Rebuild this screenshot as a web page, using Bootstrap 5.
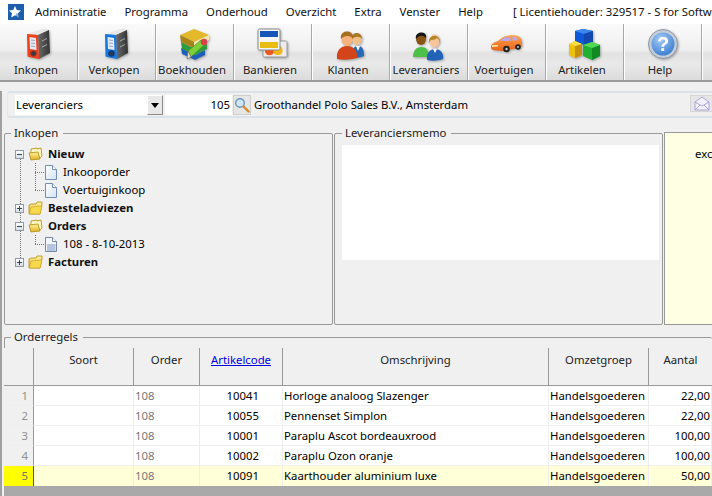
<!DOCTYPE html>
<html lang="nl">
<head>
<meta charset="utf-8">
<title>Leveranciers</title>
<link href="https://cdn.jsdelivr.net/npm/bootstrap@5.3.0/dist/css/bootstrap.min.css" rel="stylesheet">
<style>
html,body{width:712px;height:496px;overflow:hidden}
body{background:#f0f0f0;color:#000;font:11.35px/16px "Noto Sans","Liberation Sans",sans-serif}
.menu-strip{height:24px;background:#fff;padding-left:8px;white-space:nowrap;overflow:hidden}
.app-mark{width:16px;height:16px;margin-right:11px;flex:none}
.menu-strip span{margin-right:18px;color:#111}
.menu-strip .lic{margin:0 0 0 12px}
.tool-strip{height:58px;background:linear-gradient(#fafafa 0,#efefef 26px,#e2e2e2 29px,#e9e9e9 40px,#dcdcdc 55px);border-bottom:2px solid #9a9a9a}
.tool-btn{width:78px;height:56px;flex:none;border-right:1px solid #a8a8a8;box-shadow:1px 0 0 #fff;color:#222;padding-top:4px;text-align:center}
.tool-btn svg{display:block;margin:0 auto;width:36px;height:34px;filter:drop-shadow(1px 1px 1px rgba(0,0,0,.3))}
.tool-btn span{display:block;padding-right:5px}
.main-wrap{border-left:2px solid #a0a0a0;height:414px}
.cust-band{margin:9px 0 0 5px;height:27px;border-top:2px solid #dbe3e8;border-bottom:2px solid #dbe3e8;border-left:1px solid #e4e8ea;border-radius:3px 0 0 3px;padding:2px 0 0 7px;white-space:nowrap}
.pick{width:148px;height:20px;background:#fff;padding-left:1px;line-height:20px}
.pick-arrow{width:16px;height:20px;background:#e8e8e8;border:1px solid #8d8d8d;border-top-color:#fff;border-left-color:#fff}
.pick-arrow i{border:4px solid transparent;border-top:5px solid #000;border-bottom:0;display:block}
.num-box{width:67px;height:20px;margin-left:2px;background:#fff;text-align:right;padding-right:2px;line-height:20px}
.icon-btn{width:18px;height:20px;margin-left:1px;background:#e6e6e6;border:1px solid #cfcfcf}
.cust-name{margin-left:3px;line-height:20px}
.mail-btn{width:22px;height:17px;margin-left:auto;background:#e6e6e6;border:1px solid #d6d6d6;border-right:0}
.panes{height:200px;margin:8px 0 0 2px;gap:1px}
fieldset.grp{border:1px solid #999;border-radius:2px;padding:0;margin:0;min-width:0;position:relative}
fieldset.grp legend{float:none;width:auto;font-size:11.35px;line-height:14px;margin:0 0 0 6px;padding:0 5px 0 3px;color:#222}
fieldset.pane-tree{width:329px;height:199px}
fieldset.pane-memo{width:329px;height:199px;padding:0 3px 0 7px}
fieldset.pane-memo legend{margin-left:0}
.memo-area{height:115px;background:#fff;margin-top:5px}
.pane-note{flex:1 0 0;height:193px;margin-top:6px;background:#ffffe3;border:1px solid #999;border-right:0;padding:13px 0 0 30px;overflow:hidden}
.twig{list-style:none;margin:0;padding:0}
.tree-top{padding:5px 0 0 10px;position:relative}
.tree-top>.twig-main{position:relative}
.tree-rail{position:absolute;left:15px;top:15px;height:107px;border-left:1px dotted #777}
.twig-row{height:18px;display:flex;align-items:center;white-space:nowrap;position:relative}
.twig-row b{font-weight:700;color:#111}
.xp{width:9px;height:9px;border:1px solid #8f9aa5;background:linear-gradient(#fff,#d8dde2);margin-right:4px;flex:none;position:relative}
.xp::before{content:"";position:absolute;left:1px;right:1px;top:3px;height:1px;background:#345}
.xp.plus::after{content:"";position:absolute;top:1px;bottom:1px;left:3px;width:1px;background:#345}
.fold{width:15px;height:14px;margin-right:5px;flex:none}
.twig-kids{position:relative;padding-left:30px}
.twig-kids::before{content:"";position:absolute;left:20px;top:0;bottom:9px;border-left:1px dotted #777}
.twig-kids .twig-row::before{content:"";position:absolute;left:-10px;width:9px;top:9px;border-top:1px dotted #777}
.twig-kids svg{width:12px;height:15px;margin:0 6px 0 0;flex:none}
fieldset.order-grp{height:166px;margin:4px 0 0 2px;border-right:0;border-bottom:0;overflow:visible}
fieldset.order-grp legend{margin-left:6px}
.grid-wrap{margin-top:4px;overflow:hidden;margin-left:-1px}
table.ord{table-layout:fixed;width:708px;border-collapse:separate;border-spacing:0;margin:0;background:#fff;font-size:11.35px;line-height:14px}
table.ord td,table.ord th{padding:0 1px;overflow:hidden;white-space:nowrap;vertical-align:middle}
table.ord th{height:38px;background:#f0f0f0;font-weight:400;text-align:center;vertical-align:top;padding-top:5px;color:#222;border-right:1px solid #999;border-bottom:1px solid #999}
table.ord th:last-child{border-right:0}
table.ord th a{color:#0000e0}
table.ord td{height:20px;border-right:1px solid #eee;border-bottom:1px solid #eee}
table.ord td.rownum{background:#f0f0f0;color:#909090;text-align:right;padding-right:5px;border-right:1px solid #999}
table.ord td.gr{color:#777}
table.ord td.code{text-align:right;padding-right:23px}
table.ord td.amt{text-align:right;padding-right:1px}
table.ord tr.hit td{background:#ffffd8;border-bottom:0}
table.ord tr.hit td.rownum{background:#ffff00;color:#777;border-right-color:#555}
.grid-foot{height:10px;background:#a9a9a9}
</style>
</head>
<body>
<svg width="0" height="0" class="position-absolute">
<defs>
<linearGradient id="gF" x1="0" y1="0" x2="0" y2="1"><stop offset="0" stop-color="#fff3a0"/><stop offset="1" stop-color="#e0b020"/></linearGradient>
<linearGradient id="gBk" x1="0" y1="0" x2="1" y2="0"><stop offset="0" stop-color="#6a6a6a"/><stop offset="1" stop-color="#333"/></linearGradient>
<linearGradient id="gDoc" x1="0" y1="0" x2="1" y2="1"><stop offset="0" stop-color="#fff"/><stop offset="1" stop-color="#d5e2f2"/></linearGradient>
<linearGradient id="gCar" x1="0" y1="0" x2="0" y2="1"><stop offset="0" stop-color="#ffa24a"/><stop offset="1" stop-color="#e8621a"/></linearGradient>
<radialGradient id="gHelp" cx=".4" cy=".3" r=".8"><stop offset="0" stop-color="#a8cdf5"/><stop offset="1" stop-color="#2f76cf"/></radialGradient>
<symbol id="folder" viewBox="0 0 15 14"><path d="M1 4 1 13 12 13 14 3 14 1 9 1 8 3 3 3Z" fill="url(#gF)" stroke="#b08a10" stroke-width=".8"/><path d="M1.500 13 3 6 14 5 12 13Z" fill="#f7d94c" stroke="#c9a01a" stroke-width=".6"/></symbol>
<symbol id="folderO" viewBox="0 0 15 14"><path d="M3 4 3 2 9 1 9 2 13 1 14 9 12 11 3 11Z" fill="#fff6c0" stroke="#b08a10" stroke-width=".8"/><path d="M1 6 10 5 12 12 3 13Z" fill="url(#gF)" stroke="#b08a10" stroke-width=".8"/></symbol>
<symbol id="doc" viewBox="0 0 12 15"><path d="M.5.5h7l4 4v10h-11Z" fill="url(#gDoc)" stroke="#6f8fb5"/><path d="M7.500.5v4h4" fill="#fff" stroke="#6f8fb5"/></symbol>
<symbol id="docF" viewBox="0 0 12 15"><path d="M.5.5h7l4 4v10h-11Z" fill="#f4f6fa" stroke="#7488a8"/><path d="M7.500.5v4h4" fill="#fff" stroke="#7488a8"/><rect x="2" y="7" width="8.500" height="7" fill="#b8c4dc"/></symbol>
<symbol id="binder" viewBox="0 0 36 34"><path d="M7 6 22 1 28 2 17 7Z" fill="#e8e8e8"/><path d="M17 7 28 2 29 25 18 31Z" fill="url(#gBk)"/><path d="M21 13l5-2.500M21 19l5-2.500" stroke="#aaa"/></symbol>
</defs>
</svg>

<nav class="menu-strip d-flex align-items-center">
<svg class="app-mark" viewBox="0 0 16 16"><rect width="16" height="16" fill="#1c5fa8"/><path d="M7 2 8.800 6 13 6.400 10 9.300 10.800 13.500 7 11.300 3.200 13.500 4 9.300 1 6.400 5.200 6Z" fill="#fff"/><path d="M9 9.500v4M11 9.500v4M13 9.500v4" stroke="#1c5fa8" stroke-width="1"/></svg>
<span>Administratie</span><span>Programma</span><span>Onderhoud</span><span>Overzicht</span><span>Extra</span><span>Venster</span><span>Help</span><span class="lic">[ Licentiehouder: 329517 - S for Softwa</span>
</nav>

<div class="tool-strip d-flex">
<div class="tool-btn"><svg viewBox="0 0 36 34"><use href="#binder"/><path d="M6 6 17 7 18 31 8 29C6.500 29 6.500 28 6.500 27Z" fill="#f0401a"/><path d="M8.500 9 15 10 15.500 22 9 21Z" fill="#e4e8f2"/><path d="M10 12l4 .5M10 15l4 .5M10 18l4 .5" stroke="#9aa8c0"/><circle cx="12.500" cy="25.500" r="2.800" fill="#3a3a3a" stroke="#a33"/></svg><span>Inkopen</span></div>
<div class="tool-btn"><svg viewBox="0 0 36 34"><use href="#binder"/><path d="M6 6 17 7 18 31 8 29C6.500 29 6.500 28 6.500 27Z" fill="#1478e0"/><path d="M8.500 9 15 10 15.500 22 9 21Z" fill="#e4e8f2"/><path d="M10 12l4 .5M10 15l4 .5M10 18l4 .5" stroke="#9aa8c0"/><circle cx="12.500" cy="25.500" r="2.800" fill="#2a3a55" stroke="#137"/></svg><span>Verkopen</span></div>
<div class="tool-btn"><svg viewBox="0 0 36 34"><path d="M4 20 18 27 28 22 28 27 18 32 5 26Z" fill="#1f5fb8"/><path d="M4 14 18 21 30 16 30 21 18 27 5 21Z" fill="#2e9c3e"/><path d="M3 7 17 1 32 7 17 14Z" fill="#e3b82a"/><path d="M3 7 17 14 17 20 4 14Z" fill="#a88418"/><path d="M17 14 32 7 32 12 17 20Z" fill="#f4e7b0"/><path d="M11 23 14 29 27 17 24 12Z" fill="#7fcf3a" stroke="#3f8a1a" stroke-width=".6"/><path d="M11 23 10 31 14 29Z" fill="#e8e0c0" stroke="#555" stroke-width=".5"/><circle cx="27" cy="14" r="3.300" fill="#d9424c"/></svg><span>Boekhouden</span></div>
<div class="tool-btn"><svg viewBox="0 0 36 34"><rect x="8" y="13" width="24" height="16" rx="1.500" fill="#ececec" stroke="#999"/><circle cx="14.500" cy="22.500" r="4.800" fill="#ef5a1c"/><rect x="18.500" y="18" width="9" height="9" rx="4" fill="#f2b61c"/><rect x="3" y="1" width="22" height="21" rx="1.500" fill="#f5f5f5" stroke="#888"/><rect x="5" y="3" width="18" height="6" fill="#1557b8"/><rect x="5" y="14" width="18" height="6" fill="#e9bc14"/></svg><span>Bankieren</span></div>
<div class="tool-btn"><svg viewBox="0 0 36 34"><path d="M19 29c0-8 2-11 6-11s6 3 6 10c-4 2-8 2-12 1Z" fill="#2568b8"/><path d="M23 18h4l-2 5Z" fill="#fff"/><ellipse cx="24" cy="11" rx="5" ry="6" fill="#f0bf8a"/><path d="M19 11c-1-8 10-8 10 0-2-3-7-3-10 0Z" fill="#a87a22"/><path d="M4 31c-1-9 4-13 10-13s11 4 10 12c-7 2-14 2-20 1Z" fill="#d4441a"/><ellipse cx="14" cy="11" rx="5.500" ry="7" fill="#f6b27c"/><path d="M8 11c-2-10 14-10 12 0-2-4-9-4-12 0Z" fill="#a8701e"/></svg><span>Klanten</span></div>
<div class="tool-btn"><svg viewBox="0 0 36 34"><path d="M2 29c0-6 3-10 8-10s8 3 8 10Z" fill="#4cc048"/><ellipse cx="10" cy="11" rx="5" ry="6" fill="#8a5514"/><path d="M5 11c-2-8 12-9 10-1-3-3-7-3-10 1Z" fill="#151515"/><path d="M16 32c-1-7 3-11 8-11s9 4 8 10c-5 2-11 2-16 1Z" fill="#2063b8"/><path d="M22 21h4l-2 4Z" fill="#fff"/><ellipse cx="23.500" cy="13" rx="5" ry="6.500" fill="#f6c59a"/><path d="M18 16c-2-11 13-11 11 0 0-3-1-5-3-6-2 2-5 2-6 2-1 1-2 2-2 4Z" fill="#b8862a"/></svg><span>Leveranciers</span></div>
<div class="tool-btn"><svg viewBox="0 0 36 34"><path d="M2 19c0-3 2-4 7-6l5-4c5-2 12-2 15-1 2 1 4 3 4 6 0 3 0 5-2 6l-18 3-9-1c-1-1-2-1-2-3Z" fill="url(#gCar)"/><path d="M11 13l4-3.500 6-.5 1 4ZM23 9l4 0 2 3-5 1Z" fill="#b9a7e8"/><path d="M3 17l6 0 0 1.500-6 .5Z" fill="#ffe2a0"/><circle cx="17.500" cy="21" r="3.300" fill="#222"/><circle cx="29" cy="19" r="2.800" fill="#222"/><circle cx="17.500" cy="21" r="1.200" fill="#ccc"/><circle cx="29" cy="19" r="1" fill="#ccc"/></svg><span>Voertuigen</span></div>
<div class="tool-btn"><svg viewBox="0 0 36 34"><path d="M8 3 16 1 26 3 26 14 17 17 8 14Z" fill="#0d58d8"/><path d="M8 3 16 1 26 3 17 6Z" fill="#3d86ee"/><path d="M17 6V17L26 14V3Z" fill="#1448b0"/><path d="M2 16 8 13 15 16 15 27 8 30 2 27Z" fill="#eec20c"/><path d="M8 18V30L15 27V16Z" fill="#c2900a"/><path d="M2 16 8 13 15 16 8 18Z" fill="#f7dc4a"/><path d="M16 17 25 14 33 17 33 28 25 32 16 28Z" fill="#22b030"/><path d="M25 20V32L33 28V17Z" fill="#128a22"/><path d="M16 17 25 14 33 17 25 20Z" fill="#55d855"/></svg><span>Artikelen</span></div>
<div class="tool-btn"><svg viewBox="0 0 36 34"><circle cx="18" cy="16" r="14.500" fill="#c5cdd8" stroke="#8d98a8"/><circle cx="18" cy="16" r="11.500" fill="url(#gHelp)"/><text x="18" y="23" text-anchor="middle" font-family="Liberation Sans,sans-serif" font-weight="700" font-size="20" fill="#fff">?</text></svg><span>Help</span></div>
</div>

<main class="main-wrap">
<div class="cust-band d-flex">
<div class="pick d-flex justify-content-between">Leveranciers<span class="pick-arrow d-flex align-items-center justify-content-center"><i></i></span></div>
<div class="num-box">105</div>
<div class="icon-btn d-flex align-items-center justify-content-center"><svg width="16" height="16" viewBox="0 0 16 16"><circle cx="6" cy="6" r="4.300" fill="#cfe6fa" stroke="#6d93b8" stroke-width="1.400"/><path d="M9.500 9.500 14.500 14.500" stroke="#d08a30" stroke-width="2.400" stroke-linecap="round"/></svg></div>
<div class="cust-name">Groothandel Polo Sales B.V., Amsterdam</div>
<div class="mail-btn d-flex justify-content-center align-items-center"><svg width="16" height="15" viewBox="0 0 16 15"><path d="M1 6 8 1 15 6V14H1Z" fill="#f3f0fb" stroke="#a9a4dc"/><path d="M1 6 8 10 15 6M1 14 6 9M15 14 10 9" fill="none" stroke="#a9a4dc"/></svg></div>
</div>

<div class="panes d-flex">
<fieldset class="grp pane-tree">
<legend>Inkopen</legend>
<div class="tree-top">
<span class="tree-rail"></span>
<ul class="twig">
<li class="twig-main"><div class="twig-row"><span class="xp"></span><svg class="fold"><use href="#folderO"/></svg><b>Nieuw</b></div>
<ul class="twig twig-kids"><li class="twig-row"><svg><use href="#doc"/></svg>Inkooporder</li><li class="twig-row"><svg><use href="#doc"/></svg>Voertuiginkoop</li></ul></li>
<li class="twig-main"><div class="twig-row"><span class="xp plus"></span><svg class="fold"><use href="#folder"/></svg><b>Besteladviezen</b></div></li>
<li class="twig-main"><div class="twig-row"><span class="xp"></span><svg class="fold"><use href="#folderO"/></svg><b>Orders</b></div>
<ul class="twig twig-kids"><li class="twig-row"><svg><use href="#docF"/></svg>108 - 8-10-2013</li></ul></li>
<li class="twig-main"><div class="twig-row"><span class="xp plus"></span><svg class="fold"><use href="#folder"/></svg><b>Facturen</b></div></li>
</ul>
</div>
</fieldset>
<fieldset class="grp pane-memo">
<legend>Leveranciersmemo</legend>
<div class="memo-area"></div>
</fieldset>
<div class="pane-note">exc</div>
</div>

<fieldset class="grp order-grp">
<legend>Orderregels</legend>
<div class="grid-wrap">
<table class="ord">
<colgroup><col style="width:30px"><col style="width:100px"><col style="width:66px"><col style="width:83px"><col style="width:266px"><col style="width:100px"><col style="width:63px"></colgroup>
<thead><tr><th></th><th>Soort</th><th>Order</th><th><a href="#">Artikelcode</a></th><th>Omschrijving</th><th>Omzetgroep</th><th>Aantal</th></tr></thead>
<tbody>
<tr><td class="rownum">1</td><td></td><td class="gr">108</td><td class="code">10041</td><td>Horloge analoog Slazenger</td><td>Handelsgoederen</td><td class="amt">22,00</td></tr>
<tr><td class="rownum">2</td><td></td><td class="gr">108</td><td class="code">10055</td><td>Pennenset Simplon</td><td>Handelsgoederen</td><td class="amt">22,00</td></tr>
<tr><td class="rownum">3</td><td></td><td class="gr">108</td><td class="code">10001</td><td>Paraplu Ascot bordeauxrood</td><td>Handelsgoederen</td><td class="amt">100,00</td></tr>
<tr><td class="rownum">4</td><td></td><td class="gr">108</td><td class="code">10002</td><td>Paraplu Ozon oranje</td><td>Handelsgoederen</td><td class="amt">100,00</td></tr>
<tr class="hit"><td class="rownum">5</td><td></td><td class="gr">108</td><td class="code">10091</td><td>Kaarthouder aluminium luxe</td><td>Handelsgoederen</td><td class="amt">50,00</td></tr>
</tbody>
</table>
<div class="grid-foot"></div>
</div>
</fieldset>
</main>
<script src="https://cdn.jsdelivr.net/npm/bootstrap@5.3.0/dist/js/bootstrap.bundle.min.js"></script>
</body>
</html>
